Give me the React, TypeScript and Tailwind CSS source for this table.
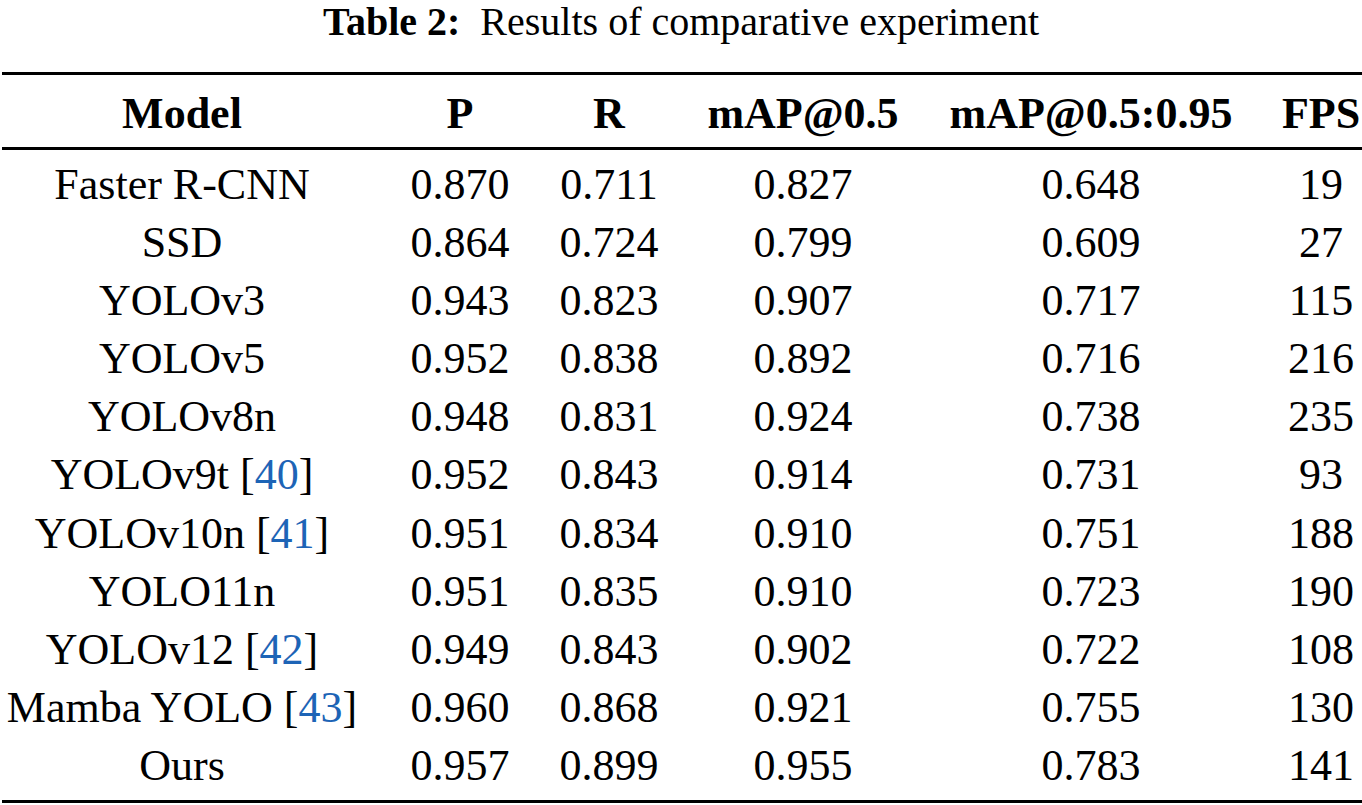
import React from "react";

type Row = { name: string; ref?: string; p: string; r: string; m50: string; m5095: string; fps: string };

const rows: Row[] = [
  { name: "Faster R-CNN", p: "0.870", r: "0.711", m50: "0.827", m5095: "0.648", fps: "19" },
  { name: "SSD", p: "0.864", r: "0.724", m50: "0.799", m5095: "0.609", fps: "27" },
  { name: "YOLOv3", p: "0.943", r: "0.823", m50: "0.907", m5095: "0.717", fps: "115" },
  { name: "YOLOv5", p: "0.952", r: "0.838", m50: "0.892", m5095: "0.716", fps: "216" },
  { name: "YOLOv8n", p: "0.948", r: "0.831", m50: "0.924", m5095: "0.738", fps: "235" },
  { name: "YOLOv9t", ref: "40", p: "0.952", r: "0.843", m50: "0.914", m5095: "0.731", fps: "93" },
  { name: "YOLOv10n", ref: "41", p: "0.951", r: "0.834", m50: "0.910", m5095: "0.751", fps: "188" },
  { name: "YOLO11n", p: "0.951", r: "0.835", m50: "0.910", m5095: "0.723", fps: "190" },
  { name: "YOLOv12", ref: "42", p: "0.949", r: "0.843", m50: "0.902", m5095: "0.722", fps: "108" },
  { name: "Mamba YOLO", ref: "43", p: "0.960", r: "0.868", m50: "0.921", m5095: "0.755", fps: "130" },
  { name: "Ours", p: "0.957", r: "0.899", m50: "0.955", m5095: "0.783", fps: "141" },
];

const cols = "grid grid-cols-[360px_196px_102px_286px_334px_82px]";
const cell = "flex justify-center whitespace-nowrap";

export default function App() {
  return (
    <div className="w-[1362px] h-[805px] bg-white text-black font-['Liberation_Serif',serif] overflow-hidden">
      <div className="text-center text-[40px] leading-[44px] whitespace-nowrap">
        <span className="font-bold">Table 2:</span>
        <span>{"\u2002"}Results of comparative experiment</span>
      </div>
      <div className="ml-[2px] w-[1360px] mt-[28px] border-t-[3px] border-b-[3px] border-black">
        <div className={`${cols} border-b-[3px] border-black pt-[6px] text-[44px] leading-[66px] font-bold`}>
          <div className={cell}>Model</div>
          <div className={cell}>P</div>
          <div className={cell}>R</div>
          <div className={cell}>mAP@0.5</div>
          <div className={`${cell} pr-[44px]`}>mAP@0.5:0.95</div>
          <div className={cell}>FPS</div>
        </div>
        <div className="pt-[6px] pb-[5px] text-[44px] leading-[58.1px]">
          {rows.map((r) => (
            <div key={r.name} className={cols}>
              <div className={cell}>
                <span>
                  {r.name}
                  {r.ref && (
                    <>
                      {" ["}
                      <span className="text-[#1d64b6]">{r.ref}</span>
                      {"]"}
                    </>
                  )}
                </span>
              </div>
              <div className={cell}>{r.p}</div>
              <div className={cell}>{r.r}</div>
              <div className={cell}>{r.m50}</div>
              <div className={`${cell} pr-[44px]`}>{r.m5095}</div>
              <div className={cell}>{r.fps}</div>
            </div>
          ))}
        </div>
      </div>
    </div>
  );
}
